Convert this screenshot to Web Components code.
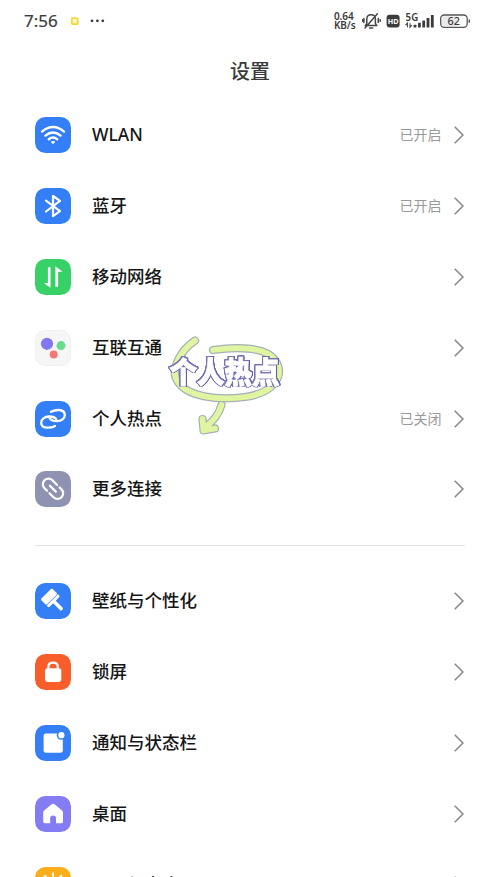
<!DOCTYPE html>
<html lang="zh-CN">
<head>
<meta charset="utf-8">
<title>设置</title>
<style>
html,body{margin:0;height:877px;overflow:hidden;background:#fff}
</style>
</head>
<body>
<settings-screen></settings-screen>
<script>
const ICONS = {
  wifi: `<g fill="none" stroke="#fff" stroke-width="2.4" stroke-linecap="round"><path d="M7 14.6Q18 5.6 29 14.6"/><path d="M10.4 18.6Q18 12.4 25.6 18.6"/><path d="M13.8 22.3Q18 18.9 22.2 22.3"/></g><path d="M15.8 24.7Q18 23.2 20.2 24.7L18 27.2Z" fill="#fff"/>`,
  bluetooth: `<path d="M11 12.7L25 23.2L18 28.2V8L25 12.8L11 23.5" fill="none" stroke="#fff" stroke-width="2.2" stroke-linejoin="round" stroke-linecap="round"/>`,
  mobile: `<g fill="#fff"><path d="M12.9 8.3H15.5V28.8L8.7 23.9H12.9Z"/><path d="M20.4 7.2L27.6 12.8H23.1V27.8H20.4Z"/></g>`,
  connect: `<circle cx="12" cy="13.8" r="6.1" fill="#8378f2"/><circle cx="26" cy="15.6" r="4.5" fill="#67dc8b"/><circle cx="18.7" cy="24.5" r="4" fill="#f57878"/>`,
  hotspot: `<g fill="none" stroke="#fff" stroke-width="2.3" stroke-linecap="round"><path d="M16 10.8C18 9.6 20.8 9 23.3 9C27.3 9 29.8 11 29.8 14C29.8 17.4 26.4 20.2 22 20.2C18.6 20.2 16 19.2 14.7 17.4"/><path d="M20 25C18 26.2 15.2 26.7 12.7 26.7C8.7 26.7 6.2 24.7 6.2 21.7C6.2 18.3 9.6 15.5 14 15.5C17.4 15.5 20 16.5 21.3 18.3"/></g>`,
  link: `<g transform="translate(18 17.8) rotate(45)" fill="none" stroke="#fff" stroke-width="2.2" stroke-linecap="round"><path d="M-3 5.6H-6.4A5.6 5.6 0 0 1-6.4-5.6H.2"/><path d="M3.8-5.6H6.4A5.6 5.6 0 0 1 6.4 5.6H.6"/><path d="M-4.4 0H4"/></g>`,
  brush: `<g transform="translate(15 14.6) rotate(45)" fill="#fff"><rect x="-5.4" y="-8" width="8" height="16" rx="1.2"/><path d="M3.3-8H4.8Q6.2-8 6.2-6.6V-2.6Q6.2-1.8 7-1.8H15.6A1.8 1.8 0 0 1 15.6 1.8H7Q6.2 1.8 6.2 2.6V6.6Q6.2 8 4.8 8H3.3Z"/></g>`,
  lock: `<rect x="10" y="14.2" width="16.3" height="13.8" rx="2.4" fill="#fff"/><path d="M13.4 15V13Q13.4 8.7 18.1 8.7Q22.8 8.7 22.8 13V15" fill="none" stroke="#fff" stroke-width="2.2"/>`,
  notice: `<rect x="8.6" y="8.4" width="19.2" height="19.4" rx="2.4" fill="#fff"/><circle cx="26.4" cy="10.2" r="4.6" fill="#347ff5"/><circle cx="26.4" cy="10.2" r="3.1" fill="#fff"/>`,
  home: `<path d="M17 8.1Q18.1 7.3 19.2 8.1L26.8 14.2Q28 15.2 28 16.6V25.4Q28 27.3 26.1 27.3H21V21.9Q21 19.4 18.1 19.4Q15.2 19.4 15.2 21.9V27.3H10.1Q8.2 27.3 8.2 25.4V16.6Q8.2 15.2 9.4 14.2Z" fill="#fff"/>`,
  sun: `<circle cx="18" cy="18" r="5.4" fill="#fff"/><g stroke="#fff" stroke-width="2" stroke-linecap="round"><path d="M18 6.6V8.9M9.7 8.7L11.2 10.2M26.3 8.7L24.8 10.2M6.2 18H8.7M27.3 18H29.8"/></g>`
};
function attach(el, html){
  const t = document.createElement('template');
  t.innerHTML = html;
  el.attachShadow({mode:'open'}).append(t.content.cloneNode(true));
}

customElements.define('app-icon', class extends HTMLElement{
  connectedCallback(){
    attach(this, `<style>:host{display:block;width:36px;height:36px;border-radius:10.5px;background:${this.getAttribute('color')};overflow:hidden;box-sizing:border-box}:host([name=connect]){box-shadow:inset 0 0 0 .7px #efeff1}svg{display:block}</style><svg width="36" height="36" viewBox="0 0 36 36">${ICONS[this.getAttribute('name')]}</svg>`);
  }
});

customElements.define('setting-row', class extends HTMLElement{
  connectedCallback(){
    attach(this, `<style>
:host{display:flex;align-items:center;height:70.9px;padding:0 35px;color:#161616}
.label{flex:1;margin-left:21px;padding-bottom:1px;font-size:17.5px;line-height:25px;font-weight:500;white-space:nowrap}
.value{font-size:14px;line-height:20px;color:#999;margin-right:11.5px;font-weight:400}
.chev{display:block}
</style><app-icon name="${this.getAttribute('icon')}" color="${this.getAttribute('color')}"></app-icon><span class="label"><slot></slot></span><span class="value"><slot name="value"></slot></span><svg class="chev" width="12" height="20" viewBox="0 0 12 20"><path d="M1.7 1.8L9.9 10L1.7 18.2" fill="none" stroke="#8b8b8b" stroke-width="1.6"/></svg>`);
  }
});

customElements.define('status-bar', class extends HTMLElement{
  connectedCallback(){
    attach(this, `<style>
:host{display:flex;align-items:center;height:42px;padding:0 29px 0 24px;box-sizing:border-box;color:#3b3b3b;font-family:"Noto Sans",sans-serif}
.time{font-size:17px;line-height:20px;width:46px;font-weight:400;-webkit-text-stroke:.2px #3b3b3b}
.net{display:flex;flex-direction:column;width:25px;margin-right:3px;font-size:10px;font-weight:600;white-space:nowrap;letter-spacing:-.1px}
.net span{line-height:9.4px}
.sp{flex:1}svg{display:block}
</style><span class="time">7:56</span>
<svg width="40" height="20" viewBox="0 0 40 20"><rect x="1.8" y="7.2" width="6" height="6" rx="1" fill="#fff7bb" stroke="#eadb3f" stroke-width="1.8"/><g fill="#3b3b3b"><circle cx="22" cy="9.8" r="1.4"/><circle cx="27.4" cy="9.8" r="1.4"/><circle cx="32.8" cy="9.8" r="1.4"/></g></svg>
<span class="sp"></span><div class="net"><span>0.64</span><span>KB/s</span></div>
<svg width="109" height="24" viewBox="362 9 109 24">
<g fill="none" stroke="#444" stroke-width="1.5" stroke-linecap="round"><path d="M365.5 25.5H376.6L375.4 23.3V18.8Q375.2 14.8 371.1 14.8Q367 14.8 366.8 18.8V23.3ZM369.6 28H372.6M377.4 13.8L365 27.9"/><path d="M363.9 18.6V22.4M362.4 19.8V21.2M378.3 18.6V22.4M380.2 19.8V21.2"/></g>
<rect x="386.6" y="14.8" width="13" height="12.8" rx="3" fill="#3c3c3c"/><text x="393.1" y="23.9" text-anchor="middle" font-size="7.2" font-weight="700" fill="#fff" font-family="Noto Sans,sans-serif">HD</text>
<text x="405.6" y="20.6" font-size="10" font-weight="600" textLength="12.6" lengthAdjust="spacingAndGlyphs" fill="#3c3c3c" font-family="Noto Sans,sans-serif">5G</text>
<path d="M407.4 27.3V23.2L405.6 25.2M410 23.3V27.2L411.8 25.2" stroke="#444" stroke-width="1.1" fill="none"/>
<g fill="#3c3c3c"><rect x="413.6" y="24.7" width="2.8" height="2.9" rx=".5"/><rect x="418" y="22.8" width="2.8" height="4.8" rx=".5"/><rect x="422.3" y="20.5" width="2.8" height="7.1" rx=".5"/><rect x="426.6" y="17.9" width="2.8" height="9.7" rx=".5"/><rect x="430.9" y="15" width="2.8" height="12.6" rx=".5"/></g>
<rect x="440.7" y="15" width="26.5" height="12.3" rx="3.5" fill="#fff" stroke="#555" stroke-width="1.3"/><path d="M444 16.2H457V26.1H444Q442 26.1 442 24V18.2Q442 16.2 444 16.2Z" fill="#e9e9e9"/><path d="M469.3 19.4V22.8" stroke="#555" stroke-width="1.4"/>
<text x="453.8" y="25" text-anchor="middle" font-size="10.8" font-weight="500" fill="#3c3c3c" font-family="Noto Sans,sans-serif">62</text>
</svg>`);
  }
});

customElements.define('hotspot-sticker', class extends HTMLElement{
  connectedCallback(){
    const lines = `<path d="M195 340.5C181 350 169 370 178 382C187 396 216 401 245 397C274 393 286 375 275 360C266 346 234 347 213 350"/><path d="M221.5 405C219 414 213 422 204 428M202.5 419L203.5 430.5L215 428.5"/>`;
    attach(this, `<style>:host{display:block;position:absolute;left:165px;top:330px;width:120px;height:110px}
svg{display:block;overflow:visible}
.word{filter:drop-shadow(.5px 0 0 #7773b5) drop-shadow(-.5px 0 0 #7773b5) drop-shadow(0 .5px 0 #7773b5) drop-shadow(0 -.5px 0 #7773b5) drop-shadow(1.2px .5px 0 #625dab)}</style>
<svg width="120" height="110" viewBox="165 330 120 110">
<g fill="none" stroke-linecap="round" stroke-linejoin="round"><g stroke="#a5afb8" stroke-width="8.2">${lines}</g><g stroke="#e0f59f" stroke-width="5.8">${lines}</g></g>
<text class="word" x="169.5" y="383" textLength="110" lengthAdjust="spacingAndGlyphs" font-family="Noto Sans CJK SC,sans-serif" font-weight="900" font-size="30" stroke-linejoin="miter" fill="#fff" stroke="#fff" stroke-width=".9">个人热点</text>
</svg>`);
  }
});

customElements.define('settings-screen', class extends HTMLElement{
  connectedCallback(){
    attach(this, `<style>
:host{display:block;position:relative;width:500px;height:877px;overflow:hidden;background:#fff;font-family:"Noto Sans","Noto Sans CJK SC",sans-serif}
h1{margin:0;padding-top:1px;height:56.5px;line-height:57px;text-align:center;font-size:20px;font-weight:500;color:#3a3a3a}
hr{border:0;height:1px;background:#e3e3e3;margin:20px 35px}
</style><status-bar></status-bar><h1>设置</h1>
<setting-row icon="wifi" color="#347ff5">WLAN<span slot="value">已开启</span></setting-row>
<setting-row icon="bluetooth" color="#347ff5">蓝牙<span slot="value">已开启</span></setting-row>
<setting-row icon="mobile" color="#38d167">移动网络</setting-row>
<setting-row icon="connect" color="#f6f6f7">互联互通</setting-row>
<setting-row icon="hotspot" color="#347ff5">个人热点<span slot="value">已关闭</span></setting-row>
<setting-row icon="link" color="#8f93b2">更多连接</setting-row>
<hr>
<setting-row icon="brush" color="#347ff5">壁纸与个性化</setting-row>
<setting-row icon="lock" color="#f95d2a">锁屏</setting-row>
<setting-row icon="notice" color="#347ff5">通知与状态栏</setting-row>
<setting-row icon="home" color="#837cf3">桌面</setting-row>
<setting-row icon="sun" color="#fbae1b">显示与亮度</setting-row>
<hotspot-sticker></hotspot-sticker>`);
  }
});
</script>
</body>
</html>
